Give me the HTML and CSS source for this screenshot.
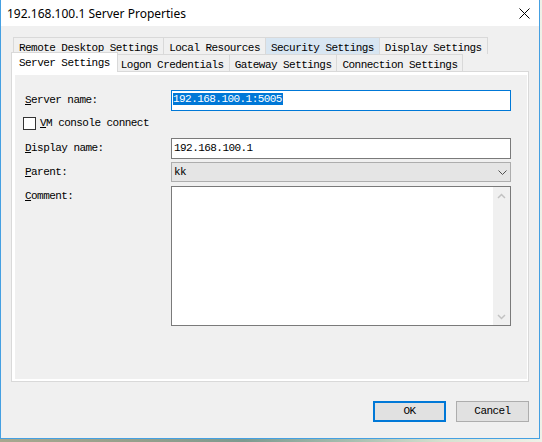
FILE: index.html
```html
<!DOCTYPE html>
<html>
<head>
<meta charset="utf-8">
<link rel="stylesheet" href="styles.css">
</head>
<body>
<div class="window">
  <div class="titlebar">
    <span class="title">192.168.100.1 Server Properties</span>
    <svg class="close" width="11" height="11" viewBox="0 0 11 11"><path d="M0.5 0.5L10.5 10.5M10.5 0.5L0.5 10.5" stroke="#000" stroke-width="1" fill="none"/></svg>
  </div>
  <div class="body">
    <div class="tabs">
      <div class="tabrow">
        <div class="tab">Remote Desktop Settings</div>
        <div class="tab">Local Resources</div>
        <div class="tab hot">Security Settings</div>
        <div class="tab">Display Settings</div>
      </div>
      <div class="tabrow">
        <div class="tab selected">Server Settings</div>
        <div class="tab">Logon Credentials</div>
        <div class="tab">Gateway Settings</div>
        <div class="tab">Connection Settings</div>
      </div>
    </div>
    <div class="panel">
      <div class="page">
        <div class="row r-server">
          <span class="lbl"><u>S</u>erver name:</span>
          <div class="field focused"><span class="sel">192.168.100.1:5005</span></div>
        </div>
        <div class="row r-check">
          <span class="checkbox"></span>
          <span class="chklbl"><u>V</u>M console connect</span>
        </div>
        <div class="row r-display">
          <span class="lbl"><u>D</u>isplay name:</span>
          <div class="field">192.168.100.1</div>
        </div>
        <div class="row r-parent">
          <span class="lbl"><u>P</u>arent:</span>
          <div class="combo"><span>kk</span>
            <svg class="chev" width="9" height="5" viewBox="0 0 9 5"><path d="M0.5 0.5L4.5 4.5L8.5 0.5" stroke="#505050" stroke-width="1" fill="none"/></svg>
          </div>
        </div>
        <div class="row r-comment">
          <span class="lbl"><u>C</u>omment:</span>
          <div class="textarea">
            <div class="text"></div>
            <div class="scrollbar">
              <div class="arrow"><svg width="9" height="6" viewBox="0 0 9 6"><path d="M1 5L4.5 1.5L8 5" stroke="#c2c2c2" stroke-width="1.5" fill="none"/></svg></div>
              <div class="arrow"><svg width="9" height="6" viewBox="0 0 9 6"><path d="M1 1L4.5 4.5L8 1" stroke="#c2c2c2" stroke-width="1.5" fill="none"/></svg></div>
            </div>
          </div>
        </div>
      </div>
    </div>
    <div class="buttons">
      <div class="btn default">OK</div>
      <div class="btn">Cancel</div>
    </div>
  </div>
</div>
</body>
</html>
```
FILE: styles.css
```css
html, body {
  margin: 0;
  padding: 0;
}
body {
  width: 542px;
  height: 442px;
  overflow: hidden;
  background: linear-gradient(to right, #a7a88f 0%, #95a08c 25%, #7d9b90 45%, #a7bfb0 65%, #d5e2d0 82%, #eef1e8 100%);
  font-family: "Liberation Mono", monospace;
  color: #000;
}
.window {
  width: 540px;
  height: 439px;
  box-sizing: border-box;
  border: 1px solid #45a0e2;
  border-top: 0;
  background: #f0f0f0;
  display: flex;
  flex-direction: column;
}
.titlebar {
  height: 26px;
  flex: none;
  background: #fff;
  display: flex;
  align-items: center;
  justify-content: space-between;
  padding: 0 9px 0 6px;
}
.title {
  font-family: "Noto Sans", "Liberation Sans", sans-serif;
  font-size: 12px;
  color: #000;
}
.close {
  display: block;
}
.body {
  flex: 1;
  padding: 11px 10px 0 10px;
}
.tabrow {
  display: flex;
  align-items: flex-start;
  padding-left: 2px;
  height: 17px;
}
.tab {
  height: 17px;
  box-sizing: border-box;
  border: 1px solid #d9d9d9;
  border-bottom: 0;
  padding: 3px 5px 0 5px;
  margin-left: -1px;
  line-height: 14px;
  font-size: 11px;
  letter-spacing: -0.55px;
  white-space: nowrap;
  background: #f0f0f0;
}
.tab:first-child {
  margin-left: 0;
}
.tab.hot {
  background: #d8e6f2;
}
.tab.selected {
  position: relative;
  z-index: 1;
  height: 20px;
  margin: -2px -2px -1px -2px;
  padding: 3px 7px 0 7px;
  background: #fff;
}
.panel {
  height: 311px;
  box-sizing: border-box;
  border: 1px solid #d9d9d9;
  background: #fff;
  padding: 3px 1px 2px 3px;
}
.page {
  height: 100%;
  box-sizing: border-box;
  background: #f0f0f0;
  padding: 15px 0 0 10px;
  font-size: 11px;
  letter-spacing: -0.55px;
}
.row {
  display: flex;
}
.lbl {
  width: 146px;
  flex: none;
  white-space: nowrap;
}
.r-server {
  height: 21px;
}
.r-server .lbl, .r-display .lbl {
  line-height: 21px;
}
.r-check {
  margin-top: 6px;
  height: 13px;
  align-items: center;
}
.r-display {
  margin-top: 8px;
  height: 21px;
}
.r-parent {
  margin-top: 3px;
  height: 20px;
}
.r-parent .lbl, .r-comment .lbl {
  line-height: 20px;
}
.r-comment {
  margin-top: 4px;
  height: 140px;
}
.field {
  width: 340px;
  height: 21px;
  box-sizing: border-box;
  border: 1px solid #7a7a7a;
  background: #fff;
  padding-left: 2px;
  line-height: 19px;
  white-space: nowrap;
}
.field.focused {
  border-color: #0078d7;
  padding: 2px 0 0 1px;
}
.sel {
  display: inline-block;
  height: 12px;
  line-height: 12px;
  background: #0078d7;
  color: #fff;
  vertical-align: top;
  padding-right: 1px;
}
.checkbox {
  width: 13px;
  height: 13px;
  box-sizing: border-box;
  border: 1px solid #333;
  background: #fff;
  margin-left: -2px;
  margin-right: 4px;
  flex: none;
}
.chklbl {
  line-height: 13px;
  white-space: nowrap;
}
.combo {
  width: 340px;
  height: 20px;
  box-sizing: border-box;
  border: 1px solid #adadad;
  background: #e5e5e5;
  padding: 0 3px 0 2px;
  line-height: 18px;
  display: flex;
  align-items: center;
  justify-content: space-between;
}
.chev {
  display: block;
}
.textarea {
  width: 340px;
  height: 140px;
  box-sizing: border-box;
  border: 1px solid #7a7a7a;
  background: #fff;
  display: flex;
}
.text {
  flex: 1;
}
.scrollbar {
  width: 17px;
  background: #f0f0f0;
  display: flex;
  flex-direction: column;
  justify-content: space-between;
}
.arrow {
  height: 17px;
  display: flex;
  align-items: center;
  justify-content: center;
}
.arrow svg {
  display: block;
}
.buttons {
  display: flex;
  justify-content: flex-end;
  gap: 10px;
  margin-top: 19px;
}
.btn {
  width: 73px;
  height: 21px;
  box-sizing: border-box;
  border: 1px solid #adadad;
  background: #e1e1e1;
  font-size: 11px;
  letter-spacing: -0.55px;
  line-height: 19px;
  text-align: center;
}
.btn.default {
  border: 2px solid #0078d7;
  line-height: 17px;
}
```
